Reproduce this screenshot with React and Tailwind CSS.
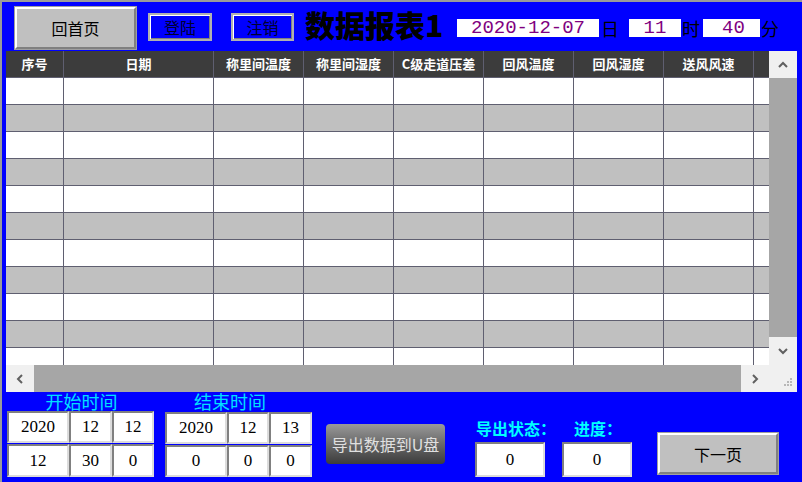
import React from 'react';

const CJK = { fontFamily: '"Noto Sans CJK SC", "Liberation Sans", sans-serif' };
const MONO = { fontFamily: '"Liberation Mono", "Noto Sans CJK SC", monospace' };
const SERIF = { fontFamily: '"Liberation Serif", "Noto Sans CJK SC", serif' };

const columns = [
  { title: '序号', w: 'w-[58px]' },
  { title: '日期', w: 'w-[150px]' },
  { title: '称里间温度', w: 'w-[90px]' },
  { title: '称里间湿度', w: 'w-[90px]' },
  { title: 'C级走道压差', w: 'w-[90px]' },
  { title: '回风温度', w: 'w-[90px]' },
  { title: '回风湿度', w: 'w-[90px]' },
  { title: '送风风速', w: 'w-[90px]' },
  { title: '', w: 'w-[15px]' },
];

const rows = Array.from({ length: 11 }, (_, i) => i);

const Chevron = ({ dir }) => {
  const pts = {
    up: '2,8 6,4 10,8',
    down: '2,4 6,8 10,4',
    left: '8,2 4,6 8,10',
    right: '4,2 8,6 4,10',
  }[dir];
  return (
    <svg width="12" height="12" viewBox="0 0 12 12">
      <polyline points={pts} fill="none" stroke="#606060" strokeWidth="2" />
    </svg>
  );
};

const Grip = () => (
  <svg width="12" height="12" viewBox="0 0 12 12">
    {[[8, 2], [8, 5], [5, 5], [8, 8], [5, 8], [2, 8]].map(([x, y], i) => (
      <rect key={i} x={x} y={y} width="2" height="2" fill="#b8b8b8" />
    ))}
  </svg>
);

const Cell = ({ w, h, children }) => (
  <div
    className={`${w} ${h} bg-white border-2 border-t-[#808080] border-l-[#808080] border-r-[#dcdcdc] border-b-[#dcdcdc] flex items-center justify-center text-[17px] text-black`}
    style={SERIF}
  >
    {children}
  </div>
);

export default function App() {
  return (
    <div className="w-[802px] h-[482px] bg-[#0000ff] border-t-2 border-l-2 border-[#9a9a9a] overflow-hidden flex flex-col" style={CJK}>
      {/* top bar */}
      <div className="h-[49px] flex items-start shrink-0">
        <div className="ml-[13px] mt-[5px] w-[121px] h-[42px] bg-[#c0c0c0] border-2 border-t-white border-l-white border-r-[#808080] border-b-[#808080] outline outline-1 outline-[#a0a0a0] flex items-center justify-center text-[16px] text-black">
          回首页
        </div>
        <div className="ml-[12px] mt-[11px] w-[64px] h-[28px] bg-[#0000ff] border-2 border-[#b0b0b0] shadow-[inset_1px_1px_0_#fff,inset_-1px_-1px_0_#808080] flex items-center justify-center text-[16px] text-[#000030]">
          登陆
        </div>
        <div className="ml-[19px] mt-[11px] w-[63px] h-[28px] bg-[#0000ff] border-2 border-[#b0b0b0] shadow-[inset_1px_1px_0_#fff,inset_-1px_-1px_0_#808080] flex items-center justify-center text-[16px] text-[#000030]">
          注销
        </div>
        <div className="ml-[11px] mt-[2px] w-[152px] h-[40px] text-[30px] leading-[40px] font-black text-black whitespace-nowrap">
          数据报表1
        </div>
        <div className="mt-[17px] w-[142px] h-[18px] bg-white text-[#800080] text-[19px] leading-[18px] text-center" style={MONO}>
          2020-12-07
        </div>
        <div className="mt-[13px] w-[30px] pl-[2px] text-[18px] leading-[26px] text-black">日</div>
        <div className="mt-[17px] w-[52px] h-[18px] bg-white text-[#800080] text-[19px] leading-[18px] text-center" style={MONO}>
          11
        </div>
        <div className="mt-[13px] w-[22px] pl-[1px] text-[18px] leading-[26px] text-black">时</div>
        <div className="mt-[17px] w-[57px] h-[18px] bg-white text-[#800080] text-[19px] leading-[18px] pl-[4px] text-center" style={MONO}>
          40
        </div>
        <div className="mt-[13px] pl-[1px] text-[18px] leading-[26px] text-black">分</div>
      </div>

      {/* table */}
      <div className="ml-[4px] w-[791px] h-[341px] flex shrink-0">
        <div className="w-[763px] flex flex-col">
          <div className="h-[27px] flex bg-[#3c3c3c] border-b border-[#5f5f70] shrink-0">
            {columns.map((c, i) => (
              <div
                key={i}
                className={`${c.w} h-full flex items-center justify-center text-white text-[13px] font-bold ${i < columns.length - 1 ? 'border-r border-[#5f5f70]' : ''}`}
              >
                {c.title}
              </div>
            ))}
          </div>
          <div className="h-[287px] overflow-hidden">
            {rows.map((r) => (
              <div key={r} className={`h-[27px] flex border-b border-[#5f5f70] ${r % 2 ? 'bg-[#c0c0c0]' : 'bg-white'}`}>
                {columns.map((c, i) => (
                  <div key={i} className={`${c.w} h-full ${i < columns.length - 1 ? 'border-r border-[#5f5f70]' : ''}`} />
                ))}
              </div>
            ))}
          </div>
          <div className="h-[27px] flex shrink-0">
            <div className="w-[28px] h-full bg-[#f0f0f0] flex items-center justify-center"><Chevron dir="left" /></div>
            <div className="flex-1 h-full bg-[#a6a6a6]" />
            <div className="w-[28px] h-full bg-[#f0f0f0] flex items-center justify-center"><Chevron dir="right" /></div>
          </div>
        </div>
        <div className="w-[28px] flex flex-col">
          <div className="h-[27px] bg-[#f0f0f0] flex items-center justify-center shrink-0"><Chevron dir="up" /></div>
          <div className="flex-1 bg-[#a6a6a6]" />
          <div className="h-[28px] bg-[#f0f0f0] flex items-center justify-center shrink-0"><Chevron dir="down" /></div>
          <div className="h-[27px] bg-[#f0f0f0] flex items-end justify-end pr-[3px] pb-[4px] shrink-0"><Grip /></div>
        </div>
      </div>

      {/* bottom controls */}
      <div className="flex items-start flex-1">
        <div className="ml-[5px] w-[147px] flex flex-col">
          <div className="h-[18px] text-[18px] leading-[18px] text-[#00e0ff] text-center pl-[2px]">开始时间</div>
          <div className="flex flex-col gap-[1px] mt-[1px]">
            <div className="flex">
              <Cell w="w-[62px]" h="h-[32px]">2020</Cell>
              <Cell w="w-[43px]" h="h-[32px]">12</Cell>
              <Cell w="w-[42px]" h="h-[32px]">12</Cell>
            </div>
            <div className="flex">
              <Cell w="w-[62px]" h="h-[33px]">12</Cell>
              <Cell w="w-[43px]" h="h-[33px]">30</Cell>
              <Cell w="w-[42px]" h="h-[33px]">0</Cell>
            </div>
          </div>
        </div>
        <div className="ml-[11px] w-[147px] flex flex-col">
          <div className="h-[19px] text-[18px] leading-[18px] text-[#00e0ff] pl-[29px]">结束时间</div>
          <div className="flex flex-col gap-[1px] mt-[1px]">
            <div className="flex">
              <Cell w="w-[62px]" h="h-[32px]">2020</Cell>
              <Cell w="w-[42px]" h="h-[32px]">12</Cell>
              <Cell w="w-[43px]" h="h-[32px]">13</Cell>
            </div>
            <div className="flex">
              <Cell w="w-[62px]" h="h-[32px]">0</Cell>
              <Cell w="w-[42px]" h="h-[32px]">0</Cell>
              <Cell w="w-[43px]" h="h-[32px]">0</Cell>
            </div>
          </div>
        </div>
        <div className="ml-[14px] mt-[32px] w-[119px] h-[40px] rounded-[4px] bg-gradient-to-b from-[#9a9a9a] to-[#3c3c3c] flex items-center justify-center text-[16px] text-[#e0e0e0] whitespace-nowrap">
          导出数据到U盘
        </div>
        <div className="ml-[30px] mt-[27px] w-[70px] flex flex-col">
          <div className="h-[19px] pl-[1px] text-[16px] leading-[19px] font-bold text-[#00ffff] whitespace-nowrap">导出状态：</div>
          <div className="mt-[4px] w-[70px] h-[35px] bg-white border-2 border-t-[#808080] border-l-[#808080] border-r-[#dcdcdc] border-b-[#dcdcdc] flex items-center justify-center text-[17px]" style={SERIF}>0</div>
        </div>
        <div className="ml-[17px] mt-[27px] w-[70px] flex flex-col">
          <div className="h-[19px] pl-[12px] text-[16px] leading-[19px] font-bold text-[#00ffff] whitespace-nowrap">进度：</div>
          <div className="mt-[4px] w-[70px] h-[35px] bg-white border-2 border-t-[#808080] border-l-[#808080] border-r-[#dcdcdc] border-b-[#dcdcdc] flex items-center justify-center text-[17px]" style={SERIF}>0</div>
        </div>
        <div className="ml-[26px] mt-[41px] w-[120px] h-[41px] bg-[#c0c0c0] border-2 border-t-white border-l-white border-r-[#808080] border-b-[#808080] outline outline-1 outline-[#a0a0a0] flex items-center justify-center text-[16px] text-black">
          下一页
        </div>
      </div>
    </div>
  );
}
